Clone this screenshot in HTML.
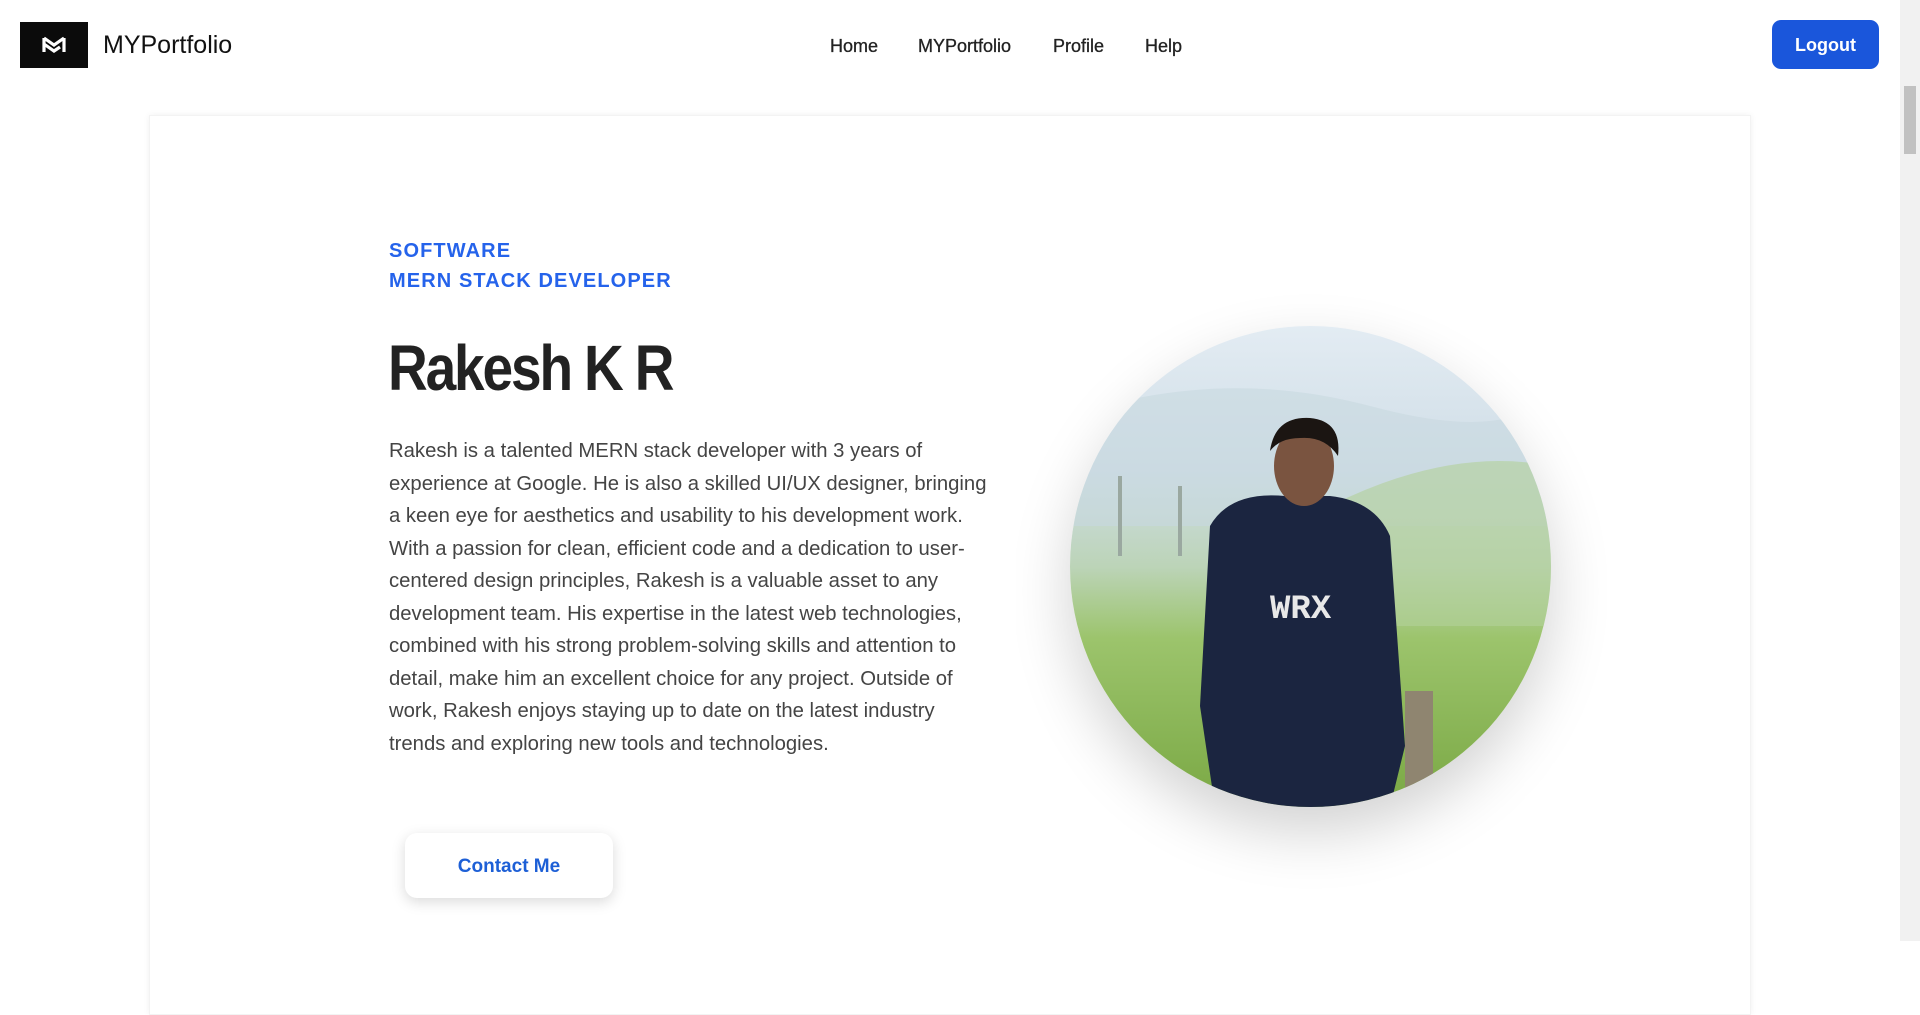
<!DOCTYPE html>
<html><head><meta charset="utf-8"><style>
*{margin:0;padding:0;box-sizing:border-box}
html,body{width:1920px;height:941px;overflow:hidden;background:#fff;font-family:"Liberation Sans","DejaVu Sans",sans-serif}
.nav{position:absolute;top:0;left:0;width:1900px;height:95px}
.logo{position:absolute;left:20px;top:22px;width:68px;height:46px;background:#0b0b0b}
.brand{position:absolute;left:103px;top:31px;font-size:25px;color:#111}
.links a{position:absolute;top:36px;font-size:18px;color:#222;text-decoration:none;-webkit-text-stroke:0.3px #222}
.logout{position:absolute;left:1772px;top:20px;width:107px;height:49px;background:#1a56db;border-radius:9px;color:#fff;font-weight:bold;font-size:18px;text-align:center;line-height:51px}
.sb{position:absolute;right:0;top:0;width:20px;height:941px;background:#f1f1f1}
.sb i{position:absolute;left:4px;top:86px;width:12px;height:68px;background:#c1c1c1}
.card{position:absolute;left:149px;top:115px;width:1602px;height:900px;background:#fff;box-shadow:0 0 6px rgba(0,0,0,.06);border:1px solid #f3f3f3}
.tag{position:absolute;left:389px;font-size:20px;font-weight:bold;color:#2563eb;letter-spacing:1.1px}
.name{position:absolute;left:388px;top:331px;font-size:64px;font-weight:bold;color:#222;letter-spacing:-2.5px;transform:scaleX(.86);transform-origin:left}
.para{position:absolute;left:389px;top:435px;width:598px;font-size:20.3px;line-height:32.5px;color:#444}
.btn{position:absolute;left:405px;top:833px;width:208px;height:65px;background:#fff;border-radius:12px;box-shadow:0 4px 14px rgba(0,0,0,.15);color:#1d5fd6;font-weight:bold;font-size:19px;text-align:center;line-height:67px}
.photo{position:absolute;left:1070px;top:326px;width:481px;height:481px;border-radius:50%;overflow:hidden;box-shadow:0 25px 60px rgba(0,0,0,.18)}
</style></head><body>
<div class="nav">
<div class="logo"><svg width="68" height="46" viewBox="0 0 68 46"><path d="M24 16 L34 23 L44 16 M24 16 L24 30 M44 16 L44 30 M24 22 L34 29 L40 25" fill="none" stroke="#fff" stroke-width="3.2"/></svg></div>
<div class="brand">MYPortfolio</div>
<div class="links"><a style="left:830px">Home</a><a style="left:918px">MYPortfolio</a><a style="left:1053px">Profile</a><a style="left:1145px">Help</a></div>
<div class="logout">Logout</div>
</div>
<div class="card"></div>
<div class="tag" style="top:240px">SOFTWARE</div>
<div class="tag" style="top:270px">MERN STACK DEVELOPER</div>
<div class="name">Rakesh K R</div>
<div class="para">Rakesh is a talented MERN stack developer with 3 years of experience at Google. He is also a skilled UI/UX designer, bringing a keen eye for aesthetics and usability to his development work. With a passion for clean, efficient code and a dedication to user-centered design principles, Rakesh is a valuable asset to any development team. His expertise in the latest web technologies, combined with his strong problem-solving skills and attention to detail, make him an excellent choice for any project. Outside of work, Rakesh enjoys staying up to date on the latest industry trends and exploring new tools and technologies.</div>
<div class="btn">Contact Me</div>
<div class="photo"><svg width="481" height="481" viewBox="0 0 481 481">
<defs><linearGradient id="sky" x1="0" y1="0" x2="0" y2="1"><stop offset="0" stop-color="#e3ecf3"/><stop offset=".3" stop-color="#cfdde6"/><stop offset=".5" stop-color="#bcd4b8"/><stop offset=".65" stop-color="#9cc46c"/><stop offset="1" stop-color="#7aa844"/></linearGradient></defs>
<rect width="481" height="481" fill="url(#sky)"/>
<path d="M0 90 Q150 40 300 80 T481 60 L481 200 L0 200Z" fill="#c8d8e0" opacity=".6"/>
<path d="M260 180 Q380 120 481 140 L481 300 L260 300Z" fill="#b3d09a" opacity=".6"/>
<path d="M50 150 L50 230 M110 160 L110 230" stroke="#9aa8a0" stroke-width="4"/>
<path d="M140 200 Q160 165 215 170 L260 170 Q305 175 320 210 L335 420 L320 481 L145 481 L130 380Z" fill="#1b2540"/>
<ellipse cx="234" cy="140" rx="30" ry="40" fill="#7a5440"/>
<path d="M200 125 Q205 90 240 92 Q272 95 268 130 Q255 110 230 112 Q210 112 200 125Z" fill="#1b1512"/>
<text x="200" y="292" font-family="Liberation Mono,monospace" font-size="34" font-weight="bold" fill="#e8e8e8">WRX</text>
<rect x="335" y="365" width="28" height="116" fill="#8f8570"/>
</svg></div>
<div class="sb"><i></i></div>
</body></html>
